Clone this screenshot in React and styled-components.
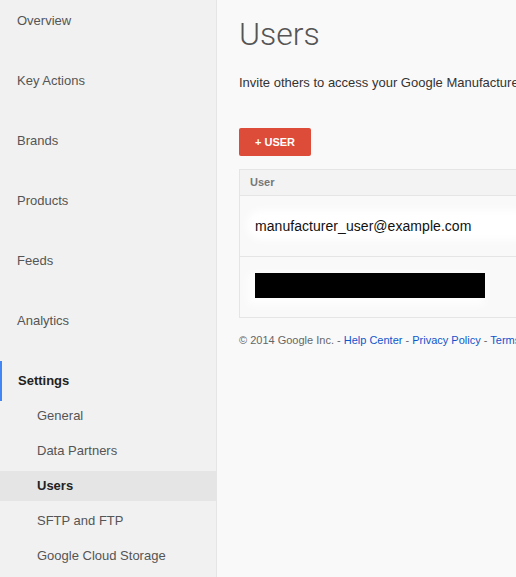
import React from 'react'
import styled, { createGlobalStyle } from 'styled-components'

const GlobalStyle = createGlobalStyle`
    html, body {
        margin: 0;
        padding: 0;
        background: #f9f9f9;
        overflow: hidden;
    }
    body {
        font-family: "Liberation Sans", Arial, sans-serif;
    }
`

const Page = styled.div`
    display: flex;
    height: 577px;
    width: 100%;
`

const Sidebar = styled.nav`
    width: 216px;
    flex-shrink: 0;
    padding-top: 1px;
    background-color: #f1f1f1;
    border-right: 1px solid #e5e5e5;
    display: flex;
    flex-direction: column;
`

const NavItem = styled.div`
    height: 40px;
    line-height: 40px;
    margin-bottom: ${p => (p.$current ? '0' : '20px')};
    padding-left: ${p => (p.$current ? '16px' : '17px')};
    border-left: ${p => (p.$current ? '2px solid #4285f4' : 'none')};
    font-size: 13px;
    color: ${p => (p.$current ? '#222' : '#555')};
    font-weight: ${p => (p.$current ? 'bold' : 'normal')};
`

const SubItem = styled.div`
    height: 30px;
    line-height: 30px;
    margin-bottom: 5px;
    padding-left: 37px;
    font-size: 13px;
    color: ${p => (p.$active ? '#222' : '#555')};
    font-weight: ${p => (p.$active ? 'bold' : 'normal')};
    background-color: ${p => (p.$active ? '#e5e5e5' : 'transparent')};
`

const Main = styled.main`
    flex: 1;
    min-width: 0;
    overflow: hidden;
    padding-left: 22px;
    white-space: nowrap;
`

const Title = styled.h1`
    margin: 14px 0 0;
    font-family: Roboto, "Liberation Sans", sans-serif;
    font-weight: 300;
    font-size: 32px;
    line-height: 40px;
    color: #555;
`

const Intro = styled.p`
    margin: 21px 0 0;
    font-size: 13px;
    line-height: 16px;
    color: #333;
`

const AddButton = styled.button`
    display: block;
    margin-top: 37px;
    width: 72px;
    height: 28px;
    border: none;
    border-radius: 2px;
    background-color: #dd4b39;
    color: #fff;
    font-family: "Liberation Sans", Arial, sans-serif;
    font-size: 11px;
    font-weight: bold;
    padding: 0;
    cursor: pointer;
`

const Table = styled.div`
    margin-top: 13px;
    width: 400px;
    border: 1px solid #e5e5e5;
    border-right: none;
`

const HeadRow = styled.div`
    height: 25px;
    line-height: 25px;
    padding-left: 10px;
    background-color: #f3f3f3;
    font-size: 11px;
    font-weight: bold;
    color: #777;
`

const Row = styled.div`
    height: 60px;
    border-top: 1px solid #e5e5e5;
    display: flex;
    align-items: center;
    padding-left: 15px;
`

/* white smear left behind around the edited address */
const Email = styled.span`
    position: relative;
    z-index: 0;
    font-size: 14px;
    letter-spacing: 0.05px;
    color: #111;
    &::before {
        content: "";
        position: absolute;
        inset: -8px -60px -6px -8px;
        background: #fff;
        border-radius: 14px;
        filter: blur(4px);
        z-index: -1;
    }
`

const Redacted = styled.div`
    width: 230px;
    height: 25px;
    margin-bottom: 3px;
    background: #000;
    box-shadow: -4px 4px 10px 3px rgba(255, 255, 255, 0.9);
`

const Footer = styled.div`
    margin-top: 16px;
    font-size: 11px;
    color: #666;
    & a {
        color: #15c;
        text-decoration: none;
    }
`

const navTop = ['Overview', 'Key Actions', 'Brands', 'Products', 'Feeds', 'Analytics']
const settings = ['General', 'Data Partners', 'Users', 'SFTP and FTP', 'Google Cloud Storage']

function App() {
    return (
        <>
            <GlobalStyle />
            <Page>
                <Sidebar>
                    {navTop.map(label => (
                        <NavItem key={label}>{label}</NavItem>
                    ))}
                    <NavItem $current>Settings</NavItem>
                    {settings.map(label => (
                        <SubItem key={label} $active={label === 'Users'}>{label}</SubItem>
                    ))}
                </Sidebar>
                <Main>
                    <Title>Users</Title>
                    <Intro>Invite others to access your Google Manufacturer Center account.</Intro>
                    <AddButton>+ USER</AddButton>
                    <Table>
                        <HeadRow>User</HeadRow>
                        <Row><Email>manufacturer_user@example.com</Email></Row>
                        <Row><Redacted /></Row>
                    </Table>
                    <Footer>
                        © 2014 Google Inc. - <a href="#">Help Center</a> - <a href="#">Privacy Policy</a> - <a href="#">Terms of Service</a>
                    </Footer>
                </Main>
            </Page>
        </>
    )
}

export default App
